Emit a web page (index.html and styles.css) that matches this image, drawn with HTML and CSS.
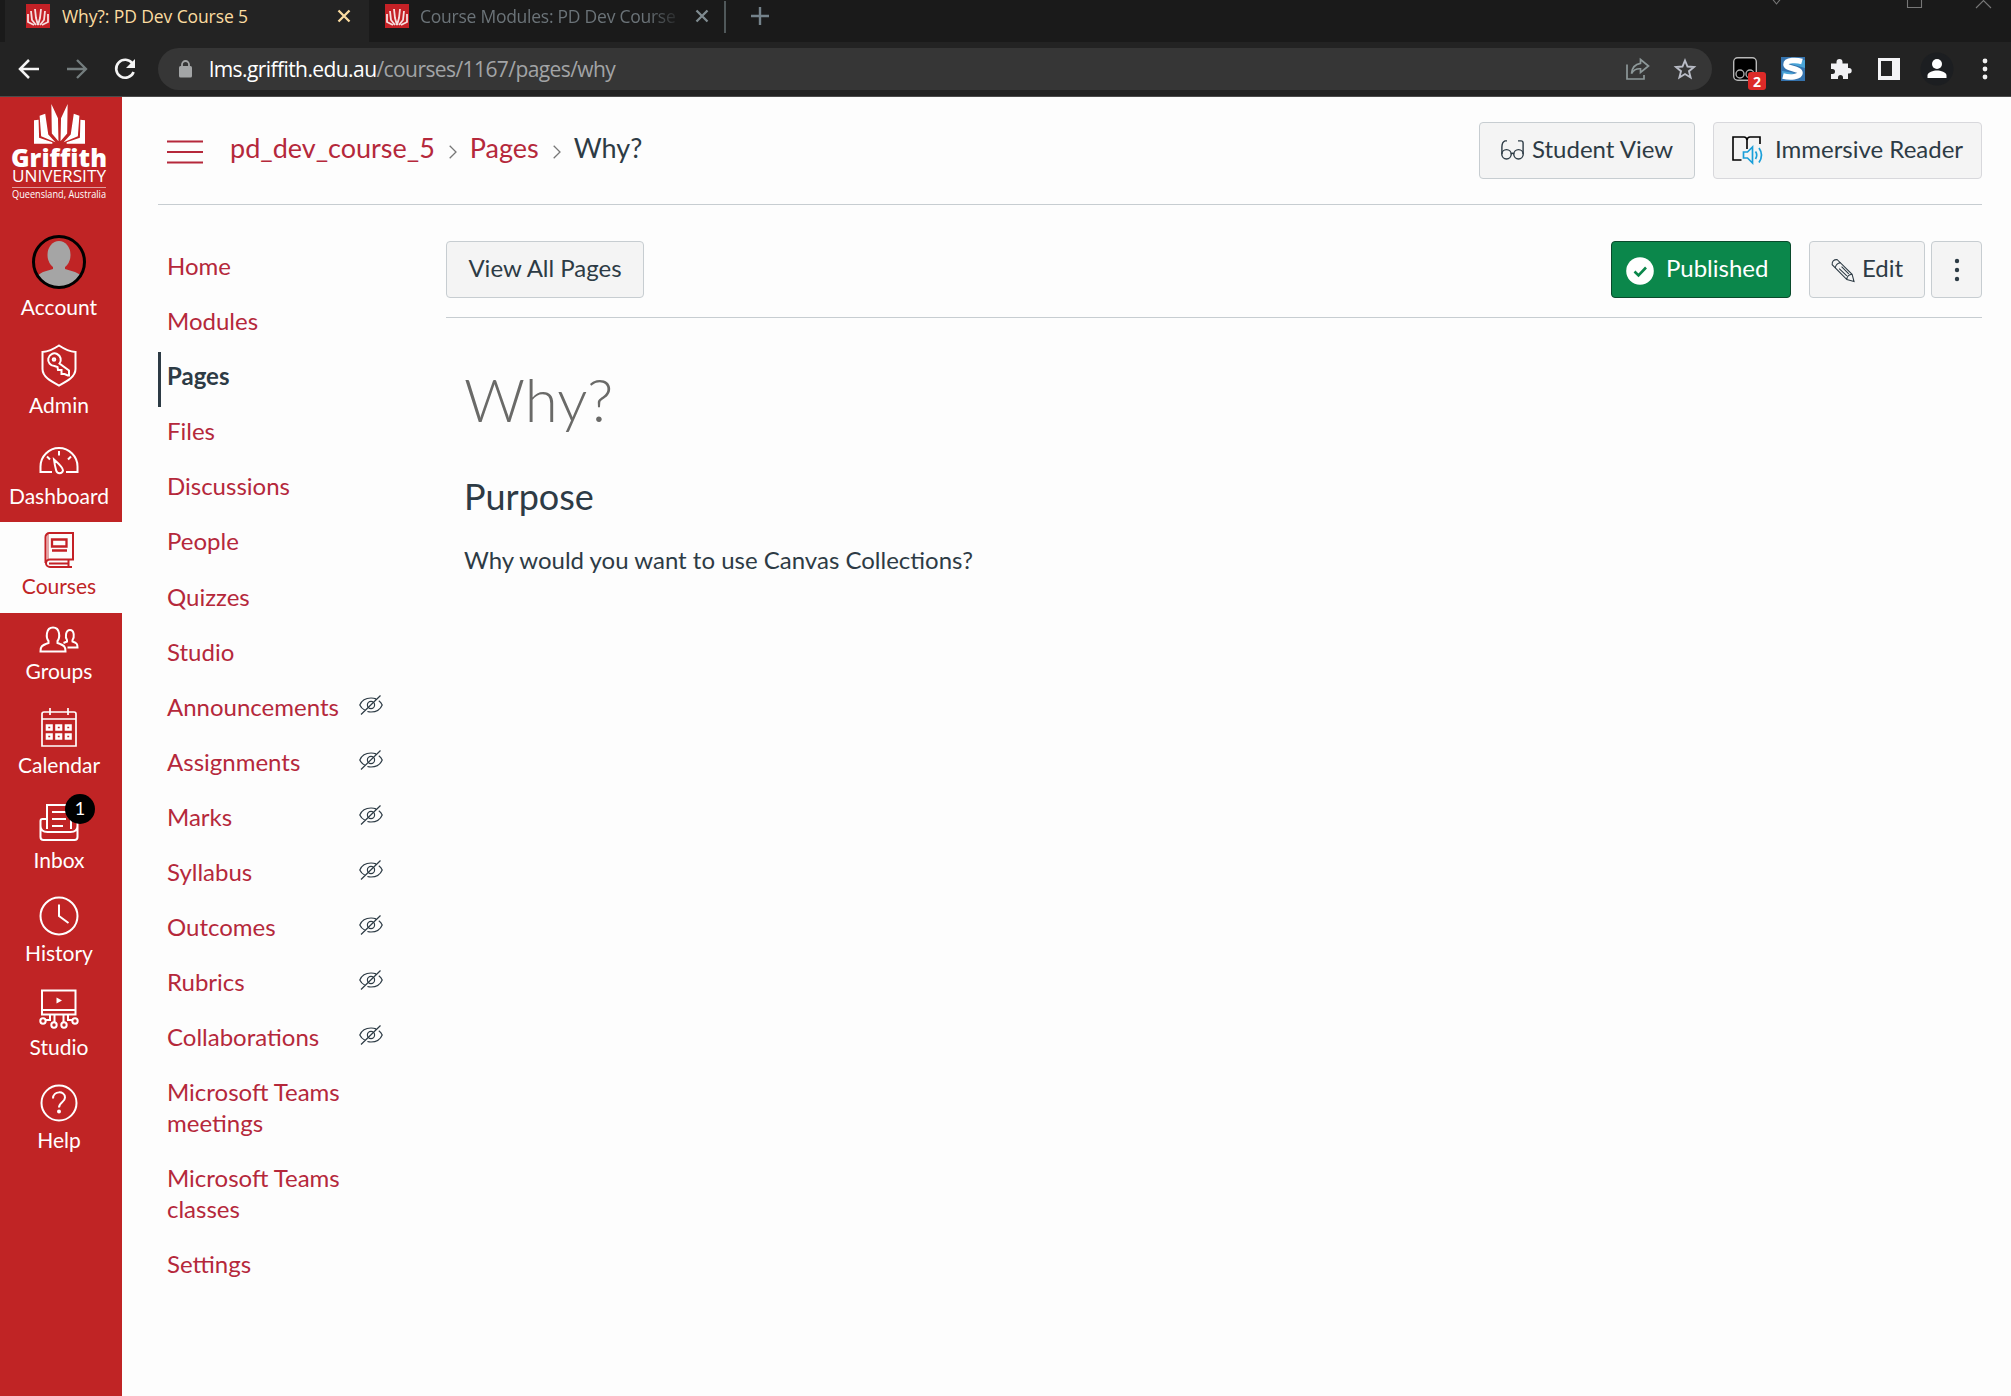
FILE: index.html
```html
<!DOCTYPE html>
<html lang="en">
<head>
<meta charset="utf-8">
<title>Why?: PD Dev Course 5</title>
<link rel="stylesheet" href="styles.css">
</head>
<body>
<svg class="defs" width="0" height="0">
  <symbol id="flame" viewBox="0 0 50 40">
    <path d="M0 16L4.500 15.500L5 33L18 37.500V39H0ZM5.500 11.500L11 9.500L14 30L21 37.500L7 31.500ZM17 0L23.500 14L24 36.500L17.500 29ZM33 0L26.500 14L26 36.500L32.500 29ZM44.500 11.500L39 9.500L36 30L29 37.500L43 31.500ZM50 16L45.500 15.500L45 33L32 37.500V39H50Z" fill="#fff"/>
  </symbol>
  <symbol id="favicon" viewBox="0 0 24 24">
    <path d="M0 0h24v24H0z" fill="#c42126"/>
    <path d="M2 10v8l6 3M5 7l1 9 4 5M9 5l1 9 2 7M15 5l-1 9-2 7M19 7l-1 9-4 5M22 10v8l-6 3" fill="none" stroke="#fff" stroke-opacity=".85" stroke-width="1.8"/>
  </symbol>
  <symbol id="close" viewBox="0 0 14 14"><path d="M1.500 1.500l11 11m0-11l-11 11" fill="none" stroke="currentColor" stroke-width="2.300"/></symbol>
  <symbol id="hidden" viewBox="0 0 24 20">
    <path d="M6 15.200C3.500 14 1.700 12.200.8 10 2.600 5.600 7 3 12 3c2 0 3.600.3 5 .9M19.800 5.800c1.600 1.100 2.700 2.500 3.400 4.200-1.800 4.400-6.200 7-11.200 7-1.300 0-2.500-.2-3.600-.5M2 19.500L21.500.5" fill="none" stroke="#2d3b45" stroke-width="1.200"/>
    <circle cx="12" cy="10" r="3.600" fill="none" stroke="#2d3b45" stroke-width="1.200"/>
  </symbol>
</svg>

<header class="browser">
  <div class="tabs">
    <div class="tab tab-active">
      <svg class="fav" width="24" height="24"><use href="#favicon"/></svg>
      <span class="tab-title">Why?: PD Dev Course 5</span>
      <svg class="tab-close" width="14" height="14"><use href="#close"/></svg>
    </div>
    <div class="tab tab-idle">
      <svg class="fav" width="24" height="24"><use href="#favicon"/></svg>
      <span class="tab-title">Course Modules: PD Dev Course</span>
      <svg class="tab-close" width="14" height="14"><use href="#close"/></svg>
    </div>
    <svg class="newtab" width="18" height="18" viewBox="0 0 18 18"><path d="M9 0v18M0 9h18" stroke="#74828a" stroke-width="2.400"/></svg>
    <svg class="window-buttons" width="216" height="9" viewBox="0 0 216 9"><path d="M-5-4L1.500 4 8-4M132.500-4v11.500h14V-4M201 8L208.500.5 216 8" fill="none" stroke="#777" stroke-width="1.100"/></svg>
  </div>
  <div class="toolbar">
    <svg class="nav-icon" width="22" height="22" viewBox="0 0 22 22"><path d="M21 11H2.500M11 2L2 11l9 9" fill="none" stroke="#f4f4f4" stroke-width="2.500"/></svg>
    <svg class="nav-icon" width="22" height="22" viewBox="0 0 22 22"><path d="M1 11h18.500M11 2l9 9-9 9" fill="none" stroke="#747d7e" stroke-width="2.300"/></svg>
    <svg class="nav-icon" width="22" height="22" viewBox="0 0 22 22"><path d="M18.500 5.500A9 9 0 1 0 19.600 14" fill="none" stroke="#f4f4f4" stroke-width="2.600"/><path d="M21 1v9h-9z" fill="#f4f4f4"/></svg>
    <div class="omnibox">
      <svg class="lock" width="13" height="18" viewBox="0 0 13 18"><rect x="0" y="6" width="13" height="11.500" rx="1.500" fill="#a3a5a6"/><path d="M3 7V4.500a3.500 3.500 0 0 1 7 0V7" fill="none" stroke="#a3a5a6" stroke-width="1.800"/></svg>
      <span class="url"><b>lms.griffith.edu.au</b><i>/courses/1167/pages/why</i></span>
      <svg class="share" width="24" height="22" viewBox="0 0 24 22"><path d="M1 6.500V21h17v-4M14.500 1.500L22.500 8l-8 6.500v-3.700C10 10.500 7.500 12 5.500 15.500 6 9.500 9.500 6 14.500 5.300z" fill="none" stroke="#8d9899" stroke-width="1.700"/></svg>
      <svg class="star" width="22" height="22" viewBox="0 0 22 22"><path d="M11 2.500l2.500 6 6.500.5-5 4.200 1.600 6.300L11 16l-5.600 3.500L7 13.200 2 9l6.500-.5z" fill="none" stroke="#b9bcc6" stroke-width="1.900"/></svg>
    </div>
    <div class="ext">
      <svg width="24" height="24" viewBox="0 0 24 24"><rect x=".7" y=".7" width="22.600" height="22.600" rx="4" fill="#000" stroke="#b9b9b9" stroke-width="1.400"/><circle cx="7" cy="17" r="4" fill="none" stroke="#aaa" stroke-width="1.400"/><circle cx="17" cy="17" r="4" fill="none" stroke="#aaa" stroke-width="1.400"/></svg>
      <span class="ext-badge">2</span>
    </div>
    <svg class="ext-s" width="24" height="24" viewBox="0 0 24 24"><path d="M0 0h24v24H0z" fill="#3573ad"/><path d="M6 6l18-3v8z" fill="#4aa5d8"/><path d="M1 14l13 2-12 4z" fill="#4aa5d8"/><path d="M21 4.500C16 3 5 2.500 5 7.500c0 4.500 14 3.500 14 8.500 0 4-10 5-17 3" fill="none" stroke="#fff" stroke-width="5.500"/></svg>
    <svg class="puzzle" width="22" height="22" viewBox="0 0 22 22"><path d="M1 5.500h5.500V4a3 3 0 0 1 6 0v1.500H18V10h1a2.700 2.700 0 0 1 0 5.400h-1V21h-5v-1.500a2.500 2.500 0 0 0-5 0V21H1v-5h1.500a2.500 2.500 0 0 0 0-5H1z" fill="#f1f1f4"/></svg>
    <svg class="panel" width="22" height="22" viewBox="0 0 22 22"><path d="M0 0h22v22H0z" fill="#f4f4f6"/><path d="M3 3h11v15H3z" fill="#242424"/></svg>
    <svg class="profile" width="34" height="34" viewBox="0 0 34 34"><circle cx="17" cy="17" r="16.500" fill="#1c1e21"/><circle cx="17" cy="12" r="5" fill="#fff"/><path d="M7.500 26v-2.500c0-3.500 6-5 9.500-5s9.500 1.500 9.500 5V26z" fill="#fff"/></svg>
    <svg class="kebab" width="6" height="22" viewBox="0 0 6 22"><g fill="#f1f1f1"><circle cx="3" cy="3" r="2.400"/><circle cx="3" cy="11" r="2.400"/><circle cx="3" cy="19" r="2.400"/></g></svg>
  </div>
</header>

<div class="app">
  <nav class="global">
    <svg class="logo" width="122" height="108" viewBox="0 0 122 108">
      <svg x="34" y="7" width="51" height="40.800"><use href="#flame"/></svg>
      <g fill="#fff">
        <text class="logo-name" x="11" y="70" textLength="96" lengthAdjust="spacingAndGlyphs">Griffith</text>
        <text class="logo-uni" x="12" y="85" textLength="94" lengthAdjust="spacingAndGlyphs">UNIVERSITY</text>
        <text class="logo-place" x="12" y="101" textLength="94" lengthAdjust="spacingAndGlyphs">Queensland, Australia</text>
      </g>
      <path d="M12 90.500h94" stroke="#e29a9c" stroke-width="1"/>
    </svg>
    <a class="item account">
      <svg width="54" height="54" viewBox="0 0 54 54"><g fill="#a5a5a5"><ellipse cx="27" cy="20" rx="11.500" ry="14"/><path d="M21 29h12v5l10 3q7 3 6 5A26 26 0 0 1 27 52 26 26 0 0 1 6 42q-1-2 5-5l10-3z"/></g><circle cx="27" cy="27" r="25.500" fill="none" stroke="#000" stroke-width="3"/></svg>
      <span>Account</span>
    </a>
    <a class="item admin">
      <svg width="36" height="43" viewBox="0 0 36 43"><g fill="none" stroke="#fff" stroke-width="2"><path d="M18 1.500C12 5.500 7 7.500 1.500 8v17c0 8 9 12.500 16.500 16.500C25.500 37.500 34.500 33 34.500 25V8C29 7.500 24 5.500 18 1.500z"/><path d="M18.500 19.500a6.300 6.300 0 1 0-5 2.500l3 1 .5 3 3.500 0v4l3 0 3.500 1.500h-.5V31.500h1.500V26.500z"/><circle cx="13" cy="15.500" r="1.300"/></g></svg>
      <span>Admin</span>
    </a>
    <a class="item dashboard">
      <svg width="40" height="28" viewBox="0 0 40 28"><g fill="none" stroke="#fff" stroke-width="2"><path d="M13 25H1.500v-5.500a18.500 18.500 0 0 1 37 0V25H27M20 4v4.500M8 9.500l3 3M32 9.500l-3 3M15 12.500c4 3.500 9 8 9 11a3.500 3.500 0 0 1-6.800 0C16.500 21 15.500 17 15 12.500z"/></g></svg>
      <span>Dashboard</span>
    </a>
    <a class="item courses">
      <svg width="30" height="36" viewBox="0 0 30 36"><g fill="none" stroke="#c42126" stroke-width="2"><path d="M1.500 31V5a4 4 0 0 1 4-4H29v26.500H6a4 3.700 0 0 0 0 7.400H28M24.500 27.500V35M5 31.500h19" /><path d="M8 7.500h14.500v7H8zM8 18.500h15" stroke-width="2.300"/><path d="M4 1.500v26" stroke-opacity=".4"/></g></svg>
      <span>Courses</span>
    </a>
    <a class="item groups">
      <svg width="40" height="27" viewBox="0 0 40 27"><g fill="none" stroke="#fff" stroke-width="2"><path d="M1.500 25.500h25c0-5-1-6-8-8.500v-2c2.500-3 3-13.500-4.500-13.500S7 12 9.500 15v2c-7 2.500-8 3.500-8 8.500zM28.500 21.500h10c0-3.500-.5-4.500-5-6v-1.500c2-2.500 2-10-2.500-10s-5 7.500-3 10v1.500l-3.500 1.500"/></g></svg>
      <span>Groups</span>
    </a>
    <a class="item calendar">
      <svg width="36" height="39" viewBox="0 0 36 39"><g fill="none" stroke="#fff" stroke-width="2"><path d="M3 4h30q2 0 2 2v32H1V6q0-2 2-2zM1 11h34M9 0v7M27 0v7" stroke-width="1.700"/><path d="M6 17.500h4.500v4H6zM15.500 17.500H20v4h-4.500zM25 17.500h4.500v4H25zM6 26.500h4.500v4H6zM15.500 26.500H20v4h-4.500zM25 26.500h4.500v4H25z" stroke-width="2.600"/></g></svg>
      <span>Calendar</span>
    </a>
    <a class="item inbox">
      <svg width="40" height="37" viewBox="0 0 40 37"><g fill="none" stroke="#fff" stroke-width="2"><path d="M8 25V1h24v24M8 15H3.500q-2 0-2 2v16q0 3 3 3h31q3 0 3-3V17q0-2-2-2H32M1.500 22c0 5 3 6 7 6h23c4 0 7-1 7-6M13 8h14M13 15h14M13 22h11"/></g></svg>
      <span>Inbox</span>
      <em class="count">1</em>
    </a>
    <a class="item history">
      <svg width="40" height="40" viewBox="0 0 40 40"><g fill="none" stroke="#fff" stroke-width="2"><circle cx="20" cy="20" r="18.500"/><path d="M20 8.500V20l9.500 7"/></g></svg>
      <span>History</span>
    </a>
    <a class="item studio">
      <svg width="40" height="40" viewBox="0 0 40 40"><g fill="none" stroke="#fff" stroke-width="2"><path d="M3 1.500h33.500v24H3zM3 21h33.500M11 26v5H7M15.500 26v7M24.500 26v7M29 26v5h4"/><circle cx="4" cy="32" r="2.700"/><circle cx="15" cy="36" r="2.700"/><circle cx="25" cy="36" r="2.700"/><circle cx="36" cy="32" r="2.700"/></g><path d="M17.500 8.500l5.500 3-5.500 3z" fill="#fff"/></svg>
      <span>Studio</span>
    </a>
    <a class="item help">
      <svg width="38" height="38" viewBox="0 0 38 38"><circle cx="19" cy="19" r="17.500" fill="none" stroke="#fff" stroke-width="2"/><path d="M13 14.500c0-8 12-8 12-1 0 5-6 4.500-6 10" fill="none" stroke="#fff" stroke-width="2"/><circle cx="19" cy="27.500" r="2" fill="#fff"/></svg>
      <span>Help</span>
    </a>
  </nav>

  <div class="page">
    <div class="crumbs">
      <svg class="burger" width="36" height="24" viewBox="0 0 36 24"><path d="M0 1.500h36M0 12h36M0 22.500h36" stroke="#b5283b" stroke-width="2"/></svg>
      <a>pd_dev_course_5</a>
      <svg class="chev" width="8" height="14" viewBox="0 0 8 14"><path d="M.7.700l6.300 6.300-6.300 6.300" fill="none" stroke="#777" stroke-width="1.300"/></svg>
      <a>Pages</a>
      <svg class="chev" width="8" height="14" viewBox="0 0 8 14"><path d="M.7.700l6.300 6.300-6.300 6.300" fill="none" stroke="#777" stroke-width="1.300"/></svg>
      <span>Why?</span>
      <button class="btn student"><svg width="23" height="20" viewBox="0 0 23 20"><g fill="none" stroke="#2d3b45" stroke-width="1.400"><circle cx="5.500" cy="14.300" r="4.700"/><circle cx="17.500" cy="14.300" r="4.700"/><path d="M10 14q1.500-1.500 3 0M.9 14V7Q1 2 4 .9h2M22.100 14V3Q22 .9 20 .9h-3"/></g></svg>Student View</button>
      <button class="btn reader"><svg width="31" height="29" viewBox="0 0 31 29"><path d="M9.500 24H1V1h11q2.500 0 3 3 .5-3 3-3h10v7M15 4v9" fill="none" stroke="#000" stroke-width="1.600"/><g fill="none" stroke="#1a9fd9" stroke-width="1.700"><path d="M11.500 16h4l5-5v16l-5-5h-4zM23.500 15.500q2.500 3.500 0 7.500M27 12q5 7 0 14.500"/></g></svg>Immersive Reader</button>
    </div>
    <div class="columns">
      <nav class="course">
        <a>Home</a>
        <a>Modules</a>
        <a class="current">Pages</a>
        <a>Files</a>
        <a>Discussions</a>
        <a>People</a>
        <a>Quizzes</a>
        <a>Studio</a>
        <a>Announcements<svg width="24" height="20"><use href="#hidden"/></svg></a>
        <a>Assignments<svg width="24" height="20"><use href="#hidden"/></svg></a>
        <a>Marks<svg width="24" height="20"><use href="#hidden"/></svg></a>
        <a>Syllabus<svg width="24" height="20"><use href="#hidden"/></svg></a>
        <a>Outcomes<svg width="24" height="20"><use href="#hidden"/></svg></a>
        <a>Rubrics<svg width="24" height="20"><use href="#hidden"/></svg></a>
        <a>Collaborations<svg width="24" height="20"><use href="#hidden"/></svg></a>
        <a>Microsoft Teams<br>meetings</a>
        <a>Microsoft Teams<br>classes</a>
        <a>Settings</a>
      </nav>
      <main class="content">
        <div class="actions">
          <button class="btn viewall">View All Pages</button>
          <button class="btn published"><svg width="28" height="28" viewBox="0 0 28 28"><circle cx="14" cy="14" r="13.800" fill="#fff"/><path d="M8.500 14.500l4 4 7.500-8" fill="none" stroke="#0b874b" stroke-width="2.600"/></svg>Published</button>
          <button class="btn edit"><svg width="24" height="25" viewBox="0 0 25 25"><g fill="none" stroke="#2d3b45" stroke-width="1.100"><path d="M1.200 6.500Q.8 1 6.500 1.200L22 16.500l2 7.500-7.500-2zM4.500 10Q5 5 10 4.500M16.500 22q0-5 5.500-5.500M8.500 10.500l8 7.500M11 8.500l7.500 7.500"/></g></svg>Edit</button>
          <button class="btn more"><svg width="6" height="24" viewBox="0 0 6 24"><g fill="#2d3b45"><circle cx="3" cy="3" r="2.200"/><circle cx="3" cy="12" r="2.200"/><circle cx="3" cy="21" r="2.200"/></g></svg></button>
        </div>
        <article>
          <h1>Why?</h1>
          <h2>Purpose</h2>
          <p>Why would you want to use Canvas Collections?</p>
        </article>
      </main>
    </div>
  </div>
</div>
</body>
</html>
```
FILE: styles.css
```css
* { box-sizing: border-box; }
body {
  margin: 0;
  height: 1396px;
  overflow: hidden;
  background: #fdfdfd;
  color: #2d3b45;
  font-family: Lato, "Liberation Sans", sans-serif;
  font-size: 24px;
}
.defs { display: none; }
svg { display: block; flex: none; overflow: visible; }

/* Browser chrome */
.browser {
  height: 97px;
  background: #232323;
  border-bottom: 1px solid #4b4b4b;
  font-family: "Open Sans", "Noto Sans", sans-serif;
}
.tabs { display: flex; height: 42px; background: #1a1a1a; overflow: hidden; }
.tab { display: flex; height: 42px; }
.tab-active { width: 364px; margin-left: 5px; padding-left: 21px; background: #232323; color: #fbdca0; }
.tab-idle { width: 357px; padding-left: 16px; color: #6b7378; border-right: 2px solid #50585a; border-image: linear-gradient(transparent 2px, #50585a 2px, #50585a 32px, transparent 32px) 1; }
.fav { margin-top: 4px; }
.tab-title {
  width: 258px;
  margin-left: 12px;
  font-size: 17.500px;
  line-height: 32px;
  letter-spacing: -.1px;
  white-space: nowrap;
}
.tab-idle .tab-title { margin-left: 11px; letter-spacing: -.25px; -webkit-mask-image: linear-gradient(90deg, #000 88%, transparent 102%); }
.tab-close { margin: 9px 0 0 17px; }
.tab-idle .tab-close { margin-left: 17px; color: #7f8b90; }
.newtab { margin: 7px 0 0 25px; }
.window-buttons { margin: 0 20px 0 auto; }
.toolbar { display: flex; align-items: center; height: 54px; padding-left: 18px; }
.nav-icon { margin-right: 26px; }
.nav-icon:nth-child(3) { margin-right: 22px; }
.omnibox {
  display: flex;
  align-items: center;
  width: 1554px;
  height: 42px;
  padding-left: 21px;
  border-radius: 21px;
  background: #363636;
}
.url { margin-left: 17px; font-size: 21px; letter-spacing: -.58px; }
.url b { font-weight: 400; color: #fff; }
.url i { font-style: normal; color: #a2a4a6; }
.share { margin-left: auto; }
.star { margin: 0 16px 0 24px; }
.ext { position: relative; margin-left: 21px; }
.ext-badge {
  position: absolute;
  left: 15px;
  top: 15px;
  width: 18px;
  height: 18px;
  border-radius: 3px;
  background: #dc2a28;
  color: #fff;
  font-size: 14px;
  font-weight: 700;
  line-height: 19px;
  text-align: center;
}
.ext-s { margin-left: 24px; }
.puzzle { margin-left: 25px; }
.panel { margin-left: 26px; }
.profile { margin-left: 20px; }
.kebab { margin-left: 28px; }

/* Global navigation */
.app { display: flex; height: 1299px; }
.global { width: 122px; flex: none; background: #c02425; color: #fff; }
.logo-name { font: 800 24px "Open Sans", sans-serif; }
.logo-uni { font: 400 17px "Open Sans", sans-serif; }
.logo-place { font: 400 10.500px "Open Sans", sans-serif; }
.item {
  position: relative;
  display: flex;
  flex-direction: column;
  align-items: center;
  justify-content: flex-end;
  height: 94px;
  padding: 0 4px 15px 0;
  font-size: 21px;
  line-height: 24px;
}
.item svg { margin-bottom: 6px; }
.account { height: 129px; }
.admin { height: 99px; padding-bottom: 16px; }
.dashboard { height: 89px; padding-bottom: 14px; }
.dashboard svg { margin-bottom: 9px; }
.courses { height: 91px; background: #fdfdfd; color: #c02425; }
.groups { height: 85px; }
.inbox svg { margin-bottom: 7px; }
.inbox { height: 95px; }
.history { height: 93px; }
.history svg { margin-bottom: 5px; }
.help { height: 93px; }
.count {
  position: absolute;
  left: 65px;
  top: 2px;
  width: 30px;
  height: 30px;
  border-radius: 15px;
  background: #000;
  font-size: 18px;
  font-style: normal;
  line-height: 28px;
  text-align: center;
}

/* Page header */
.page { flex: 1; padding: 0 29px 0 36px; }
.crumbs {
  display: flex;
  height: 108px;
  padding: 25px 0 0 9px;
  border-bottom: 1px solid #c7cdd1;
  font-size: 27px;
  line-height: 52px;
}
.crumbs a { color: #b5283b; }
.burger { margin: 18px 27px 0 0; }
.chev { margin: 23px 13px 0 14px; }
.btn {
  display: flex;
  height: 57px;
  padding: 0;
  border: 1px solid #c7cdd1;
  border-radius: 4px;
  background: #f4f4f4;
  color: #2d3b45;
  font: 24px/51px Lato, "Liberation Sans", sans-serif;
  white-space: nowrap;
}
.student { width: 216px; margin-left: auto; padding-left: 21px; }
.student svg { margin: 17px 8px 0 0; }
.reader { width: 269px; margin-left: 18px; padding-left: 18px; border-color: #d8d8dc; }
.reader svg { margin: 13px 12px 0 0; }

/* Course navigation */
.columns { display: flex; }
.course { width: 288px; flex: none; padding-top: 37px; }
.course a {
  display: flex;
  width: 225px;
  min-height: 55.100px;
  padding: 8px 0 16px 9px;
  color: #b5283b;
  line-height: 31px;
}
.course a svg { margin: 4px 0 0 auto; }
.course .current { padding-left: 6px; border-left: 3px solid #2d3b45; color: #2d3b45; font-weight: 700; }

/* Page content */
.content { flex: 1; }
.actions { display: flex; height: 113px; padding-top: 36px; border-bottom: 1px solid #c7cdd1; }
.viewall { width: 198px; justify-content: center; }
.published { width: 180px; margin-left: auto; padding-left: 14px; background: #0b874b; border-color: #0a4a2c; color: #fff; }
.published svg { margin: 15px 12px 0 0; }
.edit { width: 116px; margin-left: 18px; padding-left: 21px; }
.edit svg { margin: 16px 7px 0 0; }
.more { width: 51px; margin-left: 6px; justify-content: center; }
.more svg { margin-top: 16px; }
article { padding: 45px 18px; }
h1 { margin: 0; color: #6a6a68; font-size: 60px; font-weight: 300; line-height: 72px; }
h2 { margin: 39px 0 0; font-size: 36px; font-weight: 400; line-height: 44px; }
p { margin: 24px 0 0; line-height: 36px; }
```
